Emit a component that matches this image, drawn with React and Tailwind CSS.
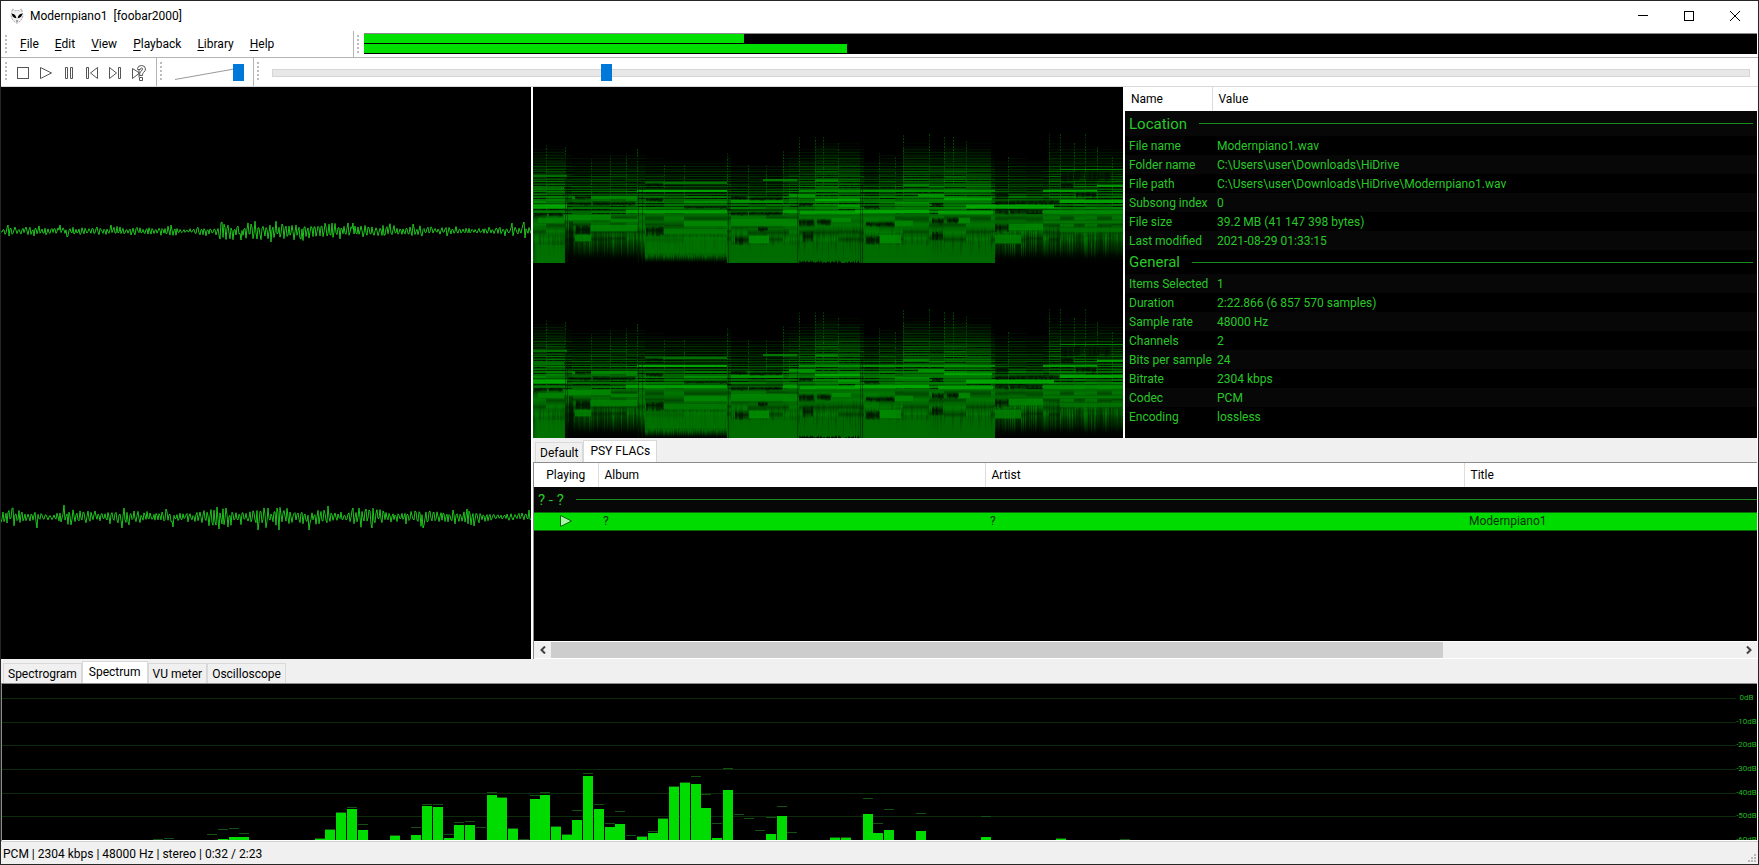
import React, { useState } from "react";

const menuItems = ["File", "Edit", "View", "Playback", "Library", "Help"];

const vuLevels = [27.3, 34.7];

const properties = [
  {
    group: "Location",
    rows: [
      ["File name", "Modernpiano1.wav"],
      ["Folder name", "C:\\Users\\user\\Downloads\\HiDrive"],
      ["File path", "C:\\Users\\user\\Downloads\\HiDrive\\Modernpiano1.wav"],
      ["Subsong index", "0"],
      ["File size", "39.2 MB (41 147 398 bytes)"],
      ["Last modified", "2021-08-29 01:33:15"],
    ],
  },
  {
    group: "General",
    rows: [
      ["Items Selected", "1"],
      ["Duration", "2:22.866 (6 857 570 samples)"],
      ["Sample rate", "48000 Hz"],
      ["Channels", "2"],
      ["Bits per sample", "24"],
      ["Bitrate", "2304 kbps"],
      ["Codec", "PCM"],
      ["Encoding", "lossless"],
    ],
  },
];

// [band, level, peak]
const spectrum = [
  [14, 0, 1], [15, 0, 2], [19, 0, 6], [20, 1, 11], [21, 3, 12], [22, 3, 7],
  [29, 1, 2], [30, 10, 11], [31, 27, 28], [32, 31, 33], [33, 10, 16], [36, 4, 5],
  [38, 5, 13], [39, 34, 36], [40, 33, 36], [41, 2, 6], [42, 15, 18], [43, 15, 19],
  [44, 0, 13], [45, 45, 48], [46, 42, 43], [47, 11, 12], [48, 0, 1], [49, 41, 45],
  [50, 45, 48], [51, 13, 14], [52, 5, 6], [53, 20, 30], [54, 64, 67], [55, 31, 36],
  [56, 13, 17], [57, 16, 29], [58, 0, 5], [59, 3, 4], [60, 7, 9], [61, 21, 22],
  [62, 53, 54], [63, 57, 58], [64, 56, 64], [65, 32, 46], [66, 2, 17], [67, 50, 72],
  [68, 0, 26], [69, 0, 22], [70, 0, 10], [71, 6, 23], [72, 24, 34], [73, 0, 8],
  [77, 2, 3], [78, 2, 3], [80, 26, 42], [81, 7, 17], [82, 10, 31], [85, 9, 27],
  [91, 3, 24], [98, 1, 2], [104, 0, 1],
];

const dbLabels = ["0dB", "-10dB", "-20dB", "-30dB", "-40dB", "-50dB", "-60dB"];

function makeRandom(seed) {
  let s = seed;
  return () => {
    s = (s * 16807) % 2147483647;
    return s / 2147483647;
  };
}

// envelope: [x, amplitude] pairs, spikes: [x, offset] pairs
function wavePoints(seed, mid, envelope, spikes) {
  const rand = makeRandom(seed);
  const points = [];
  let phase = 0;
  for (let x = 0; x <= 530; x++) {
    let i = 0;
    while (i < envelope.length - 2 && envelope[i + 1][0] < x) i++;
    const [x0, a0] = envelope[i];
    const [x1, a1] = envelope[i + 1];
    const amp = a0 + ((a1 - a0) * (x - x0)) / (x1 - x0);
    phase += 1.1 + rand() * 1.5;
    let y = Math.sin(phase) * amp * (0.4 + rand() * 0.8);
    const spike = spikes.find((p) => p[0] === x);
    if (spike) y = spike[1];
    points.push(`${x},${(mid + y).toFixed(1)}`);
  }
  return points.join(" ");
}

const leftWave = wavePoints(
  77,
  144,
  [[0, 2], [8, 5], [15, 3], [38, 5], [60, 3], [70, 5], [85, 3], [115, 5], [130, 4], [150, 3], [170, 5], [185, 1], [195, 4], [215, 5], [222, 9], [245, 8], [270, 9], [300, 8], [330, 8], [360, 7], [385, 7], [400, 5], [430, 5], [455, 4], [475, 2], [490, 4], [510, 4], [524, 6], [530, 2]],
  [[7, -6], [8, 5], [59, -6], [66, 6], [110, -6], [170, -6], [219, 8], [221, -9], [240, 9], [250, -7], [270, 11], [281, -7], [300, 8], [352, -8], [412, -7], [511, -8], [523, -9], [524, 7]]
);

const rightWave = wavePoints(
  4242,
  430,
  [[0, 5], [12, 8], [22, 6], [35, 5], [50, 3], [63, 8], [80, 7], [105, 5], [123, 8], [140, 5], [165, 7], [180, 4], [195, 5], [215, 10], [230, 8], [245, 6], [262, 11], [278, 10], [300, 6], [326, 8], [335, 3], [350, 7], [365, 10], [380, 7], [400, 4], [420, 9], [440, 6], [470, 8], [490, 3], [515, 3], [530, 6]],
  [[12, -9], [36, 11], [63, -12], [121, 11], [123, -9], [165, -8], [172, 10], [216, -10], [218, 12], [225, -9], [227, 10], [257, 13], [267, -9], [276, -9], [278, 13], [308, 13], [327, -11], [352, -9], [371, 11], [405, 7], [422, 11], [466, -8], [473, 9], [528, -7]]
);

// [from, to, top of the harmonics, wash, start of the low end fade]
const notes = [
  [0, 13, 60, 56, 180], [13, 32, 58, 56, 180], [32, 39, 66, 24, 150],
  [39, 58, 70, 34, 158], [58, 77, 68, 36, 156], [77, 93, 66, 36, 158],
  [93, 104, 66, 36, 158], [104, 112, 68, 40, 164], [112, 131, 71, 36, 170],
  [131, 151, 72, 36, 170], [151, 194, 72, 36, 170], [194, 198, 66, 20, 180],
  [198, 215, 78, 36, 180], [215, 233, 77, 40, 180], [233, 250, 77, 40, 180],
  [250, 256, 68, 44, 180], [256, 266, 64, 48, 180], [266, 282, 62, 50, 176],
  [282, 305, 52, 58, 176], [305, 327, 56, 58, 176], [327, 331, 60, 28, 180],
  [331, 346, 72, 40, 180], [346, 362, 66, 44, 180], [362, 370, 68, 46, 180],
  [370, 396, 54, 52, 180], [396, 411, 58, 52, 180], [411, 433, 54, 58, 180],
  [433, 458, 56, 56, 180], [458, 462, 66, 40, 180], [462, 475, 74, 30, 158],
  [475, 493, 70, 30, 158], [493, 510, 72, 30, 156], [510, 516, 72, 28, 156],
  [516, 527, 54, 26, 156], [527, 541, 56, 26, 156], [541, 552, 55, 26, 156],
  [552, 564, 58, 26, 158], [564, 579, 58, 26, 156], [579, 590, 60, 26, 156],
];

// note onsets that stand out as a thin vertical line: [x, top]
const onsets = [
  [13, 58], [32, 60], [58, 72], [77, 68], [93, 66], [104, 62], [131, 78], [151, 78],
  [194, 66], [215, 78], [233, 78], [250, 64], [266, 50], [282, 50], [290, 50],
  [305, 56], [346, 66], [362, 70], [370, 48], [396, 47], [411, 50], [420, 50],
  [433, 54], [475, 70], [516, 47], [527, 47], [541, 56], [552, 47], [564, 60],
  [579, 70],
];

// rows shared by the overtones of all notes: [y, strength]
const overtones = [
  [53, 0.2], [56, 0.3], [59, 0.2], [62, 0.5], [65, 0.6], [68, 0.4], [71, 0.6],
  [74, 0.3], [76, 0.5], [79, 0.9], [82, 0.6], [84, 0.8], [87, 0.5], [89, 0.9],
  [92, 0.7], [94, 0.9], [97, 0.6], [99, 1], [102, 0.6], [104, 1], [107, 0.7],
  [109, 0.9], [112, 0.8], [114, 0.9], [117, 0.8], [120, 0.9], [124, 0.9],
];

// [from, to, top, height, green]
const bands = [
  [0, 34, 117, 5, 175], [0, 31, 99, 5, 115], [5, 31, 130, 7, 130],
  [31, 78, 127, 7, 140], [93, 194, 122, 5, 165], [78, 106, 131, 5, 130],
  [104, 194, 103, 2, 175], [151, 194, 113, 4, 145], [151, 194, 133, 7, 135],
  [131, 194, 141, 7, 120], [58, 104, 137, 8, 130], [42, 58, 147, 8, 130],
  [112, 194, 150, 16, 118], [4, 31, 158, 18, 118], [198, 265, 158, 17, 112],
  [331, 396, 158, 17, 112],
  [198, 265, 131, 9, 135], [216, 236, 148, 9, 145], [198, 250, 113, 3, 150],
  [250, 265, 122, 5, 165], [267, 327, 123, 5, 165], [282, 327, 111, 4, 175],
  [305, 327, 117, 4, 165], [322, 396, 122, 5, 175], [405, 460, 123, 5, 165],
  [411, 459, 110, 4, 170], [433, 521, 117, 5, 175], [322, 462, 103, 2, 150],
  [362, 396, 114, 4, 150], [510, 590, 122, 6, 140], [527, 590, 113, 3, 165],
  [475, 510, 136, 8, 135], [462, 488, 147, 10, 130], [510, 564, 103, 2, 165],
  [564, 590, 98, 2, 160], [331, 346, 131, 14, 125], [346, 368, 147, 10, 140],
  [362, 380, 133, 7, 135], [299, 318, 130, 6, 140], [425, 437, 130, 7, 140],
  [39, 104, 109, 3, 135], [112, 194, 95, 2, 120], [266, 327, 103, 2, 145],
  [256, 282, 107, 3, 150], [385, 411, 107, 3, 150], [510, 590, 133, 4, 120],
  [527, 590, 140, 6, 115], [230, 265, 92, 2, 130], [527, 590, 82, 1, 140],
  [370, 396, 97, 2, 130], [282, 305, 93, 2, 130], [0, 34, 88, 2, 115],
];

const gaps = [
  [43, 57, 138, 9], [36, 40, 134, 42], [113, 130, 139, 9], [113, 130, 111, 3],
  [35, 58, 115, 3], [60, 102, 115, 3], [151, 194, 119, 2], [202, 215, 149, 8],
  [198, 215, 125, 3], [216, 249, 125, 3], [225, 234, 140, 4], [266, 281, 132, 6],
  [270, 280, 144, 11], [284, 297, 132, 6], [333, 346, 149, 8], [333, 361, 135, 4],
  [399, 410, 131, 6], [399, 410, 144, 9], [414, 425, 131, 5], [462, 475, 136, 9],
  [462, 475, 123, 4], [477, 509, 123, 4], [476, 526, 113, 4], [462, 475, 106, 4],
  [462, 475, 114, 3], [1, 14, 126, 3], [16, 29, 126, 3], [266, 280, 116, 3],
  [399, 410, 116, 3], [331, 346, 119, 2], [528, 540, 84, 10], [541, 551, 84, 10],
  [552, 563, 84, 10], [564, 578, 84, 10], [198, 213, 109, 3], [217, 249, 110, 3],
  [112, 130, 96, 3], [42, 58, 109, 3], [528, 540, 96, 4], [543, 563, 105, 5],
];

function buildSpectrogram() {
  const rand = makeRandom(1913);
  const rects = [];
  const add = (x, y, w, h, g, o) =>
    rects.push({ x, y, w, h, fill: `rgb(0,${Math.round(g)},0)`, o: o.toFixed(2) });
  const soft = (x, y, w, h, fill, o) => rects.push({ x, y, w, h, fill, o });

  notes.forEach(([from, to, top, wash, fade]) => {
    const w = to - from;
    for (let y = top + 6; y < 126; y += 3) {
      add(from, y, w, 3, wash + (y - top) * 0.65, Math.min(0.95, (y - top) / 45));
    }
    add(from, 126, w, 50, 104, 1);
    // overtones get closer and brighter towards the low end
    overtones.forEach(([y, strength]) => {
      if (y < top) return;
      const near = Math.min(1, (y - top) / 40);
      const thick = y > 108 ? 2 : 1;
      const level = strength * (0.5 + rand() * 0.5);
      add(from, y, w, thick, 90 + near * 60, level * (0.35 + near * 0.55));
      if (rand() > 0.45) {
        add(from + 1, y + thick, w - 1, 1, 6, 0.55);
        for (let x = from + 1; x < to - 2; x += 3) {
          if (rand() > 0.5) add(x, y + thick, 2, 1, 0, 0.5);
        }
      }
    });
    for (let b = 128; b < 156; b += 7) {
      soft(from, b, w, 5 + Math.round(rand() * 3), rand() > 0.5 ? "url(#dim)" : "url(#lit)", 0.4);
    }
    // low end breaks up into vertical streaks
    for (let x = from; x < to; x++) {
      if (fade < 180) {
        const start = fade - rand() * (fade < 165 ? 24 : 4);
        soft(x, start, 1, 176 - start, "url(#fade)", 1);
      }
      if (rand() > 0.6) soft(x, 136 + rand() * 10, 1, 14 + rand() * 22, "url(#dim)", 0.3);
    }
  });

  onsets.forEach(([x, top]) => {
    for (let y = top; y < 116; y += 3) add(x, y, 1, 2, 110, 0.25 + rand() * 0.45);
  });

  bands.forEach(([from, to, y, h, g]) => {
    if (h < 4) {
      add(from, y, to - from, h, g, 0.9);
      return;
    }
    if (h > 12) {
      add(from, y, to - from, h, g, 0.6);
      return;
    }
    add(from, y, to - from, 1, g * 0.8, 0.6);
    add(from, y + 1, to - from, h - 2, g, 0.85);
    add(from, y + h - 1, to - from, 1, g * 0.8, 0.6);
  });

  gaps.forEach(([from, to, y, h]) => {
    soft(from, y - 1, to - from, h + 2, "url(#dim)", 0.9);
    for (let x = from; x < to; x += 2) {
      if (rand() > 0.4) add(x, y + rand() * 2, 2, h - 1, 4, 0.4);
    }
  });

  // low end fade drawn again over the wide bands
  notes.forEach(([from, to, , , fade]) => {
    if (fade < 180) soft(from, fade + 8, to - from, 168 - fade, "url(#fade)", 0.7);
  });

  // pedal noise between the chords
  [32, 34, 105, 109, 195, 264, 327, 329].forEach((x) => add(x, 90, 1, 86, 30, 0.5));
  return rects;
}

const spectrogramRects = buildSpectrogram();

function Channel({ y }) {
  return (
    <g transform={`translate(0 ${y})`}>
      {spectrogramRects.map((r, i) => (
        <rect key={i} x={r.x} y={r.y} width={r.w} height={r.h} fill={r.fill} opacity={r.o} />
      ))}
    </g>
  );
}

function AlienIcon() {
  return (
    <svg width="14" height="16" viewBox="0 0 14 16" aria-hidden="true">
      <path
        d="M2.5 .8 L4.6 3 Q7 2 9.4 3 L11.5 .8 L12.2 4.5 Q13.6 7.5 12.2 10.2 Q10.4 13.8 7 15.2 Q3.6 13.8 1.8 10.2 Q.4 7.5 1.8 4.5 Z"
        fill="#f1f1f1"
        stroke="#9c9c9c"
        strokeWidth="1"
        strokeDasharray="2 1"
      />
      <path d="M1.6 5.6 Q5.6 6 6.4 10.2 Q2.6 10.4 1.6 5.6 Z M12.4 5.6 Q8.4 6 7.6 10.2 Q11.4 10.4 12.4 5.6 Z" fill="#000" />
      <path d="M6 13 h2" stroke="#555" />
    </svg>
  );
}

function Grip() {
  return (
    <div className="my-1 w-[2px] shrink-0 self-stretch bg-[repeating-linear-gradient(to_bottom,#bdbdbd_0,#bdbdbd_2px,#fff_2px,#fff_4px)]" />
  );
}

const playbackButtons = [
  { label: "Stop", shape: <rect x="1.5" y="2.5" width="11" height="11" /> },
  { label: "Play", shape: <path d="M1.5 2.5 L12.5 8 L1.5 13.5 Z" /> },
  { label: "Pause", shape: <path d="M3.5 2.5 h2 v11 h-2 z M8.5 2.5 h2 v11 h-2 z" /> },
  { label: "Previous", shape: <path d="M1.5 2.5 h2 v11 h-2 z M12.5 2.5 L5.5 8 L12.5 13.5 Z" /> },
  { label: "Next", shape: <path d="M10.5 2.5 h2 v11 h-2 z M1.5 2.5 L8.5 8 L1.5 13.5 Z" /> },
  {
    label: "Random",
    shape: (
      <>
        <path d="M1.5 3.5 L8.5 8 L1.5 13.5 Z M8 3.5 v9" />
        <path
          d="M6.5 3.5 Q7 .5 10.5 .5 Q14.5 .5 14.5 4 Q14.5 6 12.5 7.5 Q11.5 8.3 11.5 10.5 H8.5 Q8.5 7.5 10 6.2 Q11.5 5 11.5 4 Q11.5 3 10.5 3 Q9.5 3 9.3 4.5 H6.5 Z M8.5 12.5 h3 v3 h-3 z"
          fill="#fff"
        />
      </>
    ),
  },
];

function TitleBar() {
  return (
    <header className="flex h-[30px] shrink-0 items-center bg-white pl-[9px] text-black">
      <AlienIcon />
      <h1 className="ml-[6px] whitespace-pre">Modernpiano1  [foobar2000]</h1>
      <div className="ml-auto flex self-stretch">
        <button type="button" aria-label="Minimize" className="flex w-[46px] items-center justify-center">
          <svg width="10" height="10" stroke="#000"><path d="M0 4.5 H10" /></svg>
        </button>
        <button type="button" aria-label="Maximize" className="flex w-[46px] items-center justify-center">
          <svg width="10" height="10" stroke="#000" fill="none"><rect x="0.5" y="0.5" width="9" height="9" /></svg>
        </button>
        <button type="button" aria-label="Close" className="flex w-[46px] items-center justify-center">
          <svg width="10" height="10" stroke="#000"><path d="M0 0 L10 10 M10 0 L0 10" /></svg>
        </button>
      </div>
    </header>
  );
}

function MenuRow() {
  return (
    <div className="flex h-[27px] shrink-0 border-b border-[#b4b4b4] bg-white pl-1">
      <Grip />
      <nav className="flex w-[347px] shrink-0 items-center border-r border-[#b4b4b4] pl-[5px]">
        {menuItems.map((item) => (
          <button type="button" key={item} className="px-2 text-black">
            <span className="underline underline-offset-2">{item[0]}</span>
            {item.slice(1)}
          </button>
        ))}
      </nav>
      <div className="ml-[3px] flex">
        <Grip />
      </div>
      <div className="mt-[2px] mr-[1px] mb-[3px] ml-[5px] flex flex-1 flex-col gap-px border-t border-[#8a8a8a] bg-black">
        {vuLevels.map((level, i) => (
          <div key={i} className="h-[9px] bg-[#00e000]" style={{ width: `${level}%` }} />
        ))}
      </div>
    </div>
  );
}

function TransportRow() {
  const [volume, setVolume] = useState(100);
  const [position, setPosition] = useState(32);

  return (
    <div className="flex h-[29px] shrink-0 border-b border-[#d9d9d9] bg-white pl-1">
      <Grip />
      <div className="flex w-[150px] shrink-0 items-center gap-[3px] border-r border-[#b4b4b4] pt-px pl-[6px]">
        {playbackButtons.map((b) => (
          <button type="button" key={b.label} aria-label={b.label} className="flex w-5 justify-center">
            <svg width="16" height="16" viewBox="-1 0 16 16" fill="none" stroke="#555">
              {b.shape}
            </svg>
          </button>
        ))}
      </div>
      <div className="ml-[3px] flex">
        <Grip />
      </div>
      <div className="flex w-[92px] shrink-0 items-center border-r border-[#b4b4b4] pt-px pl-3">
        <div className="relative flex h-[17px] w-[70px] items-center">
          <svg className="absolute inset-0" width="70" height="17" aria-hidden="true">
            <path d="M1 15.5 L60 5" stroke="#9a9a9a" />
          </svg>
          <input
            type="range"
            aria-label="Volume"
            min="0"
            max="100"
            value={volume}
            onChange={(e) => setVolume(e.target.value)}
            className="relative h-[17px] w-full appearance-none bg-transparent [&::-webkit-slider-thumb]:h-[17px] [&::-webkit-slider-thumb]:w-[11px] [&::-webkit-slider-thumb]:appearance-none [&::-webkit-slider-thumb]:bg-[#0078d7]"
          />
        </div>
      </div>
      <div className="ml-[3px] flex">
        <Grip />
      </div>
      <div className="flex flex-1 items-center pt-px pr-2 pl-[13px]">
        <input
          type="range"
          aria-label="Seek"
          min="0"
          max="143"
          value={position}
          onChange={(e) => setPosition(e.target.value)}
          className="h-[17px] w-full appearance-none bg-transparent [&::-webkit-slider-runnable-track]:h-2 [&::-webkit-slider-runnable-track]:border [&::-webkit-slider-runnable-track]:border-[#d6d6d6] [&::-webkit-slider-runnable-track]:bg-[#e7e7e7] [&::-webkit-slider-thumb]:-mt-[6px] [&::-webkit-slider-thumb]:h-[17px] [&::-webkit-slider-thumb]:w-[11px] [&::-webkit-slider-thumb]:appearance-none [&::-webkit-slider-thumb]:bg-[#0078d7]"
        />
      </div>
    </div>
  );
}

function Oscilloscope() {
  return (
    <section aria-label="Oscilloscope" className="min-h-0 min-w-0 overflow-hidden bg-black">
      <svg className="h-full w-full" viewBox="0 0 530 572" preserveAspectRatio="none" fill="none" stroke="#1fc41f">
        <polyline points={leftWave} />
        <polyline points={rightWave} />
      </svg>
    </section>
  );
}

function Spectrogram() {
  return (
    <section aria-label="Spectrogram" className="min-h-0 min-w-0 overflow-hidden bg-black">
      <svg className="h-full w-full" viewBox="0 0 590 351" preserveAspectRatio="none">
        <defs>
          <linearGradient id="fade" x1="0" y1="0" x2="0" y2="1">
            <stop offset="0" stopColor="#000" stopOpacity="0" />
            <stop offset="0.8" stopColor="#000" stopOpacity="0.9" />
            <stop offset="1" stopColor="#000" stopOpacity="1" />
          </linearGradient>
          <linearGradient id="dim" x1="0" y1="0" x2="0" y2="1">
            <stop offset="0" stopColor="#001400" stopOpacity="0" />
            <stop offset="0.5" stopColor="#001400" stopOpacity="0.9" />
            <stop offset="1" stopColor="#001400" stopOpacity="0" />
          </linearGradient>
          <linearGradient id="lit" x1="0" y1="0" x2="0" y2="1">
            <stop offset="0" stopColor="#008c00" stopOpacity="0" />
            <stop offset="0.5" stopColor="#008c00" stopOpacity="1" />
            <stop offset="1" stopColor="#008c00" stopOpacity="0" />
          </linearGradient>
        </defs>
        <Channel y={0} />
        <Channel y={175} />
      </svg>
    </section>
  );
}

function Properties() {
  let index = 0;
  const shade = () => (index++ % 2 === 0 ? "bg-[#070707]" : "bg-black");

  return (
    <section aria-label="Properties" className="min-h-0 min-w-0 overflow-hidden bg-black text-[#28c828]">
      <table className="w-full table-fixed border-collapse">
        <colgroup>
          <col className="w-[87px]" />
          <col />
        </colgroup>
        <thead>
          <tr className="h-6 bg-white text-left text-black">
            <th className="border-r border-[#dcdcdc] p-0 pl-[6px] font-normal">Name</th>
            <th className="p-0 pl-[6px] font-normal">Value</th>
          </tr>
        </thead>
        {properties.map((section, i) => (
          <tbody key={section.group}>
            <tr className={`${i === 0 ? "h-[25px]" : "h-6"} ${shade()}`}>
              <th colSpan={2} className="p-0 pr-1 pl-1 font-normal">
                <div className="flex items-center gap-3">
                  <span className="text-[15px] leading-5">{section.group}</span>
                  <span className="h-px flex-1 bg-[#1d8a1d]" />
                </div>
              </th>
            </tr>
            {section.rows.map(([name, value]) => (
              <tr key={name} className={`h-[19px] ${shade()}`}>
                <td className="p-0 pl-1 whitespace-nowrap">{name}</td>
                <td className="p-0 pl-[5px] whitespace-nowrap">{value}</td>
              </tr>
            ))}
          </tbody>
        ))}
      </table>
    </section>
  );
}

function Tabs({ tabs, active, onSelect, label }) {
  return (
    <div role="tablist" aria-label={label} className="flex h-6 shrink-0 items-end bg-[#f0f0f0] pl-[2px] text-black">
      {tabs.map((tab) =>
        tab === active ? (
          <button
            type="button"
            role="tab"
            aria-selected="true"
            key={tab}
            className="h-[22px] border border-b-0 border-[#d9d9d9] bg-white px-[6px] pb-[2px]"
          >
            {tab}
          </button>
        ) : (
          <button
            type="button"
            role="tab"
            aria-selected="false"
            key={tab}
            onClick={() => onSelect(tab)}
            className="h-5 border border-b-0 border-[#d9d9d9] px-1"
          >
            {tab}
          </button>
        )
      )}
    </div>
  );
}

function Playlist() {
  const [tab, setTab] = useState("PSY FLACs");

  return (
    <section aria-label="Playlist" className="flex min-h-0 min-w-0 flex-col bg-[#f0f0f0]">
      <Tabs label="Playlists" tabs={["Default", "PSY FLACs"]} active={tab} onSelect={setTab} />
      <div className="flex min-h-0 flex-1 flex-col border-t border-l border-[#8c8c8c] bg-black">
        <table className="w-full table-fixed border-collapse">
          <colgroup>
            <col className="w-16" />
            <col className="w-[387px]" />
            <col className="w-[479px]" />
            <col />
          </colgroup>
          <thead>
            <tr className="h-6 bg-white text-left text-black">
              <th className="border-r border-[#dcdcdc] p-0 text-center font-normal">Playing</th>
              <th className="border-r border-[#dcdcdc] p-0 pl-[6px] font-normal">Album</th>
              <th className="border-r border-[#dcdcdc] p-0 pl-[6px] font-normal">Artist</th>
              <th className="p-0 pl-[6px] font-normal">Title</th>
            </tr>
          </thead>
          <tbody>
            <tr className="h-[25px] bg-[#070707] text-[#28c828]">
              <th colSpan={4} className="p-0 pt-px pl-1 font-normal">
                <div className="flex items-center gap-3">
                  <span className="text-[15px] leading-5">? - ?</span>
                  <span className="h-px flex-1 bg-[#1d8a1d]" />
                </div>
              </th>
            </tr>
            <tr className="h-[18px] border-y border-[#0a6a0a] bg-[#00dc00] text-[#053005]">
              <td className="p-0">
                <svg className="mx-auto" width="12" height="12" aria-label="Playing">
                  <path d="M0.5 0.5 L11.5 6 L0.5 11.5 Z" fill="#a6f5a6" stroke="#0a6a0a" />
                </svg>
              </td>
              <td className="p-0 pl-[5px]">?</td>
              <td className="p-0 pl-[5px]">?</td>
              <td className="p-0 pl-[5px]">Modernpiano1</td>
            </tr>
          </tbody>
        </table>
        <div className="mt-auto flex h-[18px] items-stretch border-y border-white bg-[#f0f0f0]">
          <button type="button" aria-label="Scroll left" className="flex w-[17px] items-center justify-center">
            <svg width="6" height="8" fill="none" stroke="#404040" strokeWidth="2"><path d="M5 0.5 L1.5 4 L5 7.5" /></svg>
          </button>
          <div className="flex flex-1">
            <div className="w-[75%] bg-[#cdcdcd]" />
          </div>
          <button type="button" aria-label="Scroll right" className="flex w-[17px] items-center justify-center">
            <svg width="6" height="8" fill="none" stroke="#404040" strokeWidth="2"><path d="M1 0.5 L4.5 4 L1 7.5" /></svg>
          </button>
        </div>
      </div>
    </section>
  );
}

function Spectrum() {
  return (
    <section aria-label="Spectrum" className="flex h-[157px] shrink-0 overflow-hidden border-b border-white bg-black">
      <svg className="h-[156px] min-w-0 flex-1" viewBox="0 0 1734 156" preserveAspectRatio="none" shapeRendering="crispEdges">
        {[14, 38, 61, 85, 109, 132].map((y) => (
          <rect key={y} x="0" y={y} width="1734" height="1" fill="#0b2b0b" />
        ))}
        {spectrum.map(([band, level, peak]) => {
          const x = Math.round(band * 10.745) + 1;
          return (
            <g key={band}>
              <rect x={x} y={156 - peak} width="10" height="1" fill="#145214" />
              <rect x={x} y={156 - level} width="10" height={level} fill="#00dc00" />
            </g>
          );
        })}
      </svg>
      <div className="-mb-1 flex w-[21px] flex-col justify-between pt-[10px] text-[8px] leading-[8px] text-[#22b422]">
        {dbLabels.map((label) => (
          <span key={label} className="text-center whitespace-nowrap">{label}</span>
        ))}
      </div>
    </section>
  );
}

export default function App() {
  const [view, setView] = useState("Spectrum");

  return (
    <div className="flex h-screen flex-col overflow-hidden border border-[#262626] bg-white font-[Roboto,'Open_Sans',sans-serif] text-[12px] leading-4">
      <TitleBar />
      <MenuRow />
      <TransportRow />
      <main className="grid min-h-0 flex-1 grid-cols-[530fr_1224fr] gap-[2px] pr-px">
        <Oscilloscope />
        <div className="grid min-h-0 min-w-0 grid-rows-[351fr_221fr]">
          <div className="grid min-h-0 min-w-0 grid-cols-[590fr_632fr] gap-[2px]">
            <Spectrogram />
            <Properties />
          </div>
          <Playlist />
        </div>
      </main>
      <Tabs
        label="Visualisations"
        tabs={["Spectrogram", "Spectrum", "VU meter", "Oscilloscope"]}
        active={view}
        onSelect={setView}
      />
      <div className="mr-px shrink-0 border-t border-l border-[#8c8c8c]">
        <Spectrum />
      </div>
      <footer className="flex h-[23px] shrink-0 items-center justify-between border-t border-[#d0d0d0] bg-[#f0f0f0] pt-px pl-[2px] text-black">
        <span>PCM | 2304 kbps | 48000 Hz | stereo | 0:32 / 2:23</span>
        <svg className="mr-[2px] mb-[2px] self-end" width="8" height="8" fill="#b8b8b8" aria-hidden="true">
          <path d="M6 0h2v2h-2z M6 3h2v2h-2z M3 3h2v2h-2z M6 6h2v2h-2z M3 6h2v2h-2z M0 6h2v2h-2z" />
        </svg>
      </footer>
    </div>
  );
}
